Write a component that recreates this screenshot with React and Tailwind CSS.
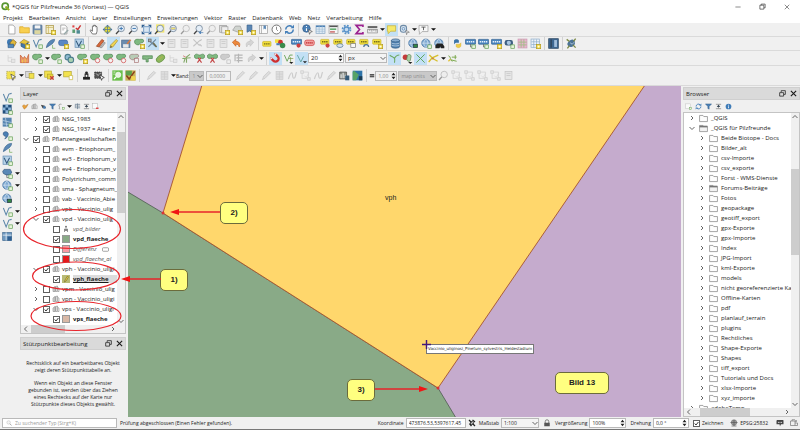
import React from "react";

const blue = "#4a7fb5";
const page = <path d="M4 1.5h6l3 3V14.5H4z" fill="#fff" stroke="#8a8a8a" />;
const plusBadge = (
  <g>
    <rect x="9.5" y="9.5" width="6" height="6" fill="#f5e04a" stroke="#b59a1e" />
    <path d="M12.5 11v3M11 12.5h3" stroke="#fff" />
  </g>
);
const greenBadge = <rect x="10" y="10" width="5" height="5" fill="#e8f4dc" stroke="#5f9c4f" />;
const lens = (
  <g>
    <circle cx="9" cy="6.5" r="4.7" fill="#e4eef8" stroke="#7d8ea0" strokeWidth="1.3" />
    <path d="M5.5 10L1.5 14.5" stroke="#444" strokeWidth="2" />
  </g>
);
const blob = (
  <path d="M1 4c1-3 5-2 7-2s6-1 6 2-2 3-4 3-1 3-4 3-6-2-5-6z" fill="#7fb980" stroke="#4c8450" />
);
const globe = (
  <g>
    <circle cx="7" cy="7.5" r="6" fill="#7fa9d2" stroke="#3f6d9d" />
    <path d="M1 7.5h12M7 1.5c-4 4-4 8 0 12M7 1.5c4 4 4 8 0 12" fill="none" stroke="#dbe8f4" />
  </g>
);
const vee = <path d="M2 3l4 10L10 3l4-1" fill="none" stroke="#5c86a8" strokeWidth="1.5" />;
const label = (
  <g>
    <rect x="1" y="2" width="12" height="7" rx="1" fill="#f2df3a" stroke="#c9b52a" />
    <path d="M3 5.5h8" stroke="#6d641c" strokeWidth="2" strokeDasharray="2 1" />
  </g>
);
const tag = (
  <g>
    <rect x="0.5" y="2" width="15" height="7" rx="1" fill="#4a86c0" stroke="#2f5f90" />
    <path d="M2.5 5.5h11" stroke="#e6eff8" strokeWidth="2" strokeDasharray="2 1" />
  </g>
);
const tree = (
  <g>
    <path d="M2 13V6l4-3v10zM7 13V3l4-1v11z" fill="#d8d8d8" stroke="#777" />
    <path d="M12 5l2 1v7h-2" fill="#eee" stroke="#777" />
  </g>
);

const ART = {
  page,
  folder: <path d="M1 4h5l1.5 1.5H15V13H1z" fill="#f8cf4f" stroke="#d9a520" />,
  save: (
    <g>
      <rect x="1.5" y="1.5" width="13" height="13" rx="1" fill="#6d8cae" stroke="#4a6a8c" />
      <rect x="4" y="2" width="8" height="4.5" fill="#f4f4f4" />
      <rect x="3.5" y="9" width="9" height="5.5" fill="#ddd7a0" />
    </g>
  ),
  layout: <g><rect x="1.5" y="2" width="11" height="12" fill="#f4efcf" stroke="#a48f3c" /><path d="M2 5h10M5 2v12" stroke="#c5b25a" />{plusBadge}</g>,
  manager: <g>{page}<path d="M6 6h5M6 8.5h3" stroke="#999" /><path d="M8 14l6-6 1.5 1.5-6 6z" fill="#9aa" /></g>,
  style: <g><rect x="2" y="2" width="3" height="3" fill="#d44" /><path d="M7 6l3 2 4-6" stroke="#c33" strokeWidth="2" fill="none" /><rect x="2" y="8" width="4" height="5" fill="#5b9c72" /><rect x="8" y="9" width="5" height="5" fill="#4d8a92" /></g>,
  hand: <path d="M5 14.500L1.500 9.500 2.800 8.500 5 10.500V3.500a.8.800 0 011.600 0V2.300a.8.800 0 011.700 0v.7a.8.800 0 011.700 0v1.500a.8.800 0 011.700 0V10.500L10.500 14.500z" fill="#fff" stroke="#444" />,
  pan: <g><path d="M8 1l3 3H5zM8 15l3-3H5zM1 8l3-3v6zM15 8l-3-3v6z" fill="#48729a" /><rect x="4.5" y="4.5" width="7" height="7" fill="#e9df3f" stroke="#8d9c38" /><path d="M8 4v8M4 8h8" stroke="#48729a" /></g>,
  zoomin: <g>{lens}<path d="M9 4v5M6.5 6.5h5" stroke={blue} strokeWidth="1.5" /></g>,
  zoomout: <g>{lens}<path d="M6.5 6.5h5" stroke={blue} strokeWidth="1.5" /></g>,
  full: <g><path d="M1 1h5L1 6zM15 1h-5l5 5zM1 15h5l-5-5zM15 15h-5l5-5z" fill="#2f5e90" /><rect x="4" y="4" width="8" height="8" fill="#d7e5f2" stroke={blue} /></g>,
  zoomsel: <g><rect x="3" y="0.5" width="12" height="12" fill="#f2e56a" />{lens}</g>,
  zoomlayer: <g>{lens}<path d="M6 5h6v3H6z" fill="#f2e56a" stroke="#aaa" /></g>,
  zoomlast: <g>{lens}<path d="M9 12.5h6M9 12.5l2-2v4z" stroke={blue} fill={blue} /></g>,
  lens,
  newmap: <g><rect x="1" y="2" width="10" height="10" fill="#ddd" stroke="#999" /><rect x="4" y="4" width="9" height="9" fill="#eee" stroke="#999" />{plusBadge}</g>,
  new3d: <g><path d="M1 9l4-6h7l2 5-5 4z" fill="#d0d4d0" stroke="#999" />{plusBadge}</g>,
  bookmark: <g><path d="M3 1.500h7V12l-3.500-2L3 12z" fill="#5a87b5" stroke="#3a628c" />{plusBadge}</g>,
  marks: <g><rect x="2" y="2" width="12" height="12" fill="#fafafa" stroke="#999" /><path d="M8 2h3.500v6L9.700 6.500 8 8z" fill="#5a87b5" /><path d="M5 2v12" stroke="#999" /></g>,
  clock: <g><circle cx="8" cy="8" r="6.5" fill="#fff" stroke="#666" strokeWidth="1.3" /><path d="M8 4v4l2 2" fill="none" stroke="#555" /></g>,
  refresh: <g fill="none" stroke="#3f7cb8" strokeWidth="2.2"><path d="M2.500 8a5.500 5.500 0 019-4.200M13.500 8a5.500 5.500 0 01-9 4.200" /><path d="M14.500 1v5h-5zM1.500 15v-5h5z" fill="#3f7cb8" stroke="none" /></g>,
  identify: <g><circle cx="6.5" cy="6.5" r="5.5" fill="#4a7fb5" stroke="#335c87" /><path d="M6.5 3v1.5M6.5 6v4" stroke="#fff" strokeWidth="1.6" /><path d="M9 8l6 3-3 1 -1 3z" fill="#fff" stroke="#555" /></g>,
  table: <g><rect x="1.5" y="2.5" width="13" height="11" fill="#e7f0f8" stroke="#7ea0c0" /><path d="M1.5 3.5h13" stroke={blue} strokeWidth="2" /><path d="M1.5 7.5h13M1.5 10.5h13M6 3v10M10.5 3v10" stroke="#9ebad4" /></g>,
  stats: <g><rect x="1.5" y="2" width="13" height="12" fill="#f5f5f5" stroke="#999" /><path d="M2 3.5h12" stroke="#555" strokeWidth="2" /><path d="M3 7.5h9" stroke="#4ca35b" strokeWidth="2" /><path d="M3 11.5h7" stroke="#c95f5f" strokeWidth="2" /></g>,
  gear: <g><circle cx="8" cy="8" r="5.8" fill="none" stroke="#5b93c9" strokeWidth="2.5" strokeDasharray="2.6 1.95" /><circle cx="8" cy="8" r="3.6" fill="#c6dcf0" stroke="#5b93c9" strokeWidth="2" /></g>,
  sigma: <path d="M13 4.500V2H3l5 6-5 6h10v-2.500" fill="none" stroke="#9b2290" strokeWidth="2.4" />,
  ruler: <g><rect x="1" y="3" width="14" height="3" fill="#666" /><rect x="1" y="8" width="14" height="5" fill="#eee" stroke="#888" /><path d="M4 8v2M7 8v3M10 8v2M13 8v3" stroke="#777" /></g>,
  tip: <path d="M2 2.500h12v8H7L3 14v-3.500H2z" fill="#f5e96b" stroke="#c4ad2f" />,
  annot: <g><rect x="2" y="2" width="9" height="10" rx="4" fill="#dce6ef" stroke="#6d8aa6" strokeWidth="1.5" /><circle cx="6.5" cy="7" r="2" fill="none" stroke={blue} /><path d="M10 9l5 3-3 .5-1 3z" fill="#fff" stroke="#777" /></g>,
  text: <g><path d="M1.500 2h13v9H6l-4 4v-4h-.5z" fill="#f7f7f7" stroke="#999" /><path d="M5 4.500h6M8 4.500V9" stroke="#555" strokeWidth="1.3" /></g>,
  source: <g><circle cx="6" cy="6" r="4.5" fill="#3f79b3" /><path d="M6 7l4-5 5 4-3 6-6-1z" fill="#e0b93b" stroke="#8c6b20" /><path d="M3 9h8v5H3z" fill="#5389bb" stroke="#2f5e90" /></g>,
  geopkg: <g><path d="M1 7l6-5 8 4-5 3z" fill="#e6c53d" stroke="#a2852a" /><path d="M3 8v4l5 3 5-2V7L9 10z" fill="#4179ad" stroke="#2a527c" />{plusBadge}</g>,
  shape: <g>{vee}{greenBadge}</g>,
  feather: <g><path d="M2 14C3 7 8 2 14 2c0 5-6 8-12 12z" fill="#5a88b6" stroke="#3c668f" /><path d="M11 10v5h4" stroke="#6faa55" fill="none" /></g>,
  bubble: <g><rect x="1" y="3" width="13" height="8" rx="3" fill="#5a88c4" stroke="#3c66a0" />{plusBadge}</g>,
  dbubble: <g><path d="M3 2h9l2 4-2 4H6l-4-2-1-3z" fill="#5a88b6" stroke="#33587d" /><path d="M7 10v4h3" stroke="#555" fill="none" />{greenBadge}</g>,
  virtual: <g><rect x="1.5" y="1.5" width="12" height="12" fill="#b9d4ea" stroke="#5b87ae" /><path d="M3 4l4 8 4-8" fill="none" stroke="#34597c" strokeWidth="1.5" />{greenBadge}</g>,
  pencils: <g><path d="M2 12L10 2l3 2-7 9z" fill="#d9683a" stroke="#91401d" /><path d="M7 14l6-8 2 1-5 7z" fill="#bbb" stroke="#888" /></g>,
  pencil: <g><path d="M3 14l1-4 8-8 2 2-7 9z" fill="#f0d552" stroke="#a98d27" /><path d="M3 14l1-3 2 2z" fill="#555" /></g>,
  savedit: <g><rect x="1" y="3" width="12" height="11" fill="#6d8cae" stroke="#4a6a8c" /><rect x="3" y="9" width="8" height="5" fill="#e9e9e9" /><path d="M8 8l5-6 2 1-5 6z" fill="#e17b3d" /></g>,
  addpoly: <g>{blob}{plusBadge}</g>,
  vertex: <g><path d="M2 13L13 2M2 3l11 10" stroke="#69839a" strokeWidth="1.5" /><rect x="2" y="1.5" width="4" height="4" fill="#aaa" stroke="#666" /><path d="M9 7l5 6" stroke="#6f6f52" strokeWidth="2" /></g>,
  doc: <g><rect x="3" y="2" width="10" height="12" fill="#ddd" stroke="#999" /><path d="M5 5h6M5 8h6" stroke="#999" /></g>,
  cut: <path d="M2 2l9 9M2 12l10-9M11 9l3 3M12 4l2-2" stroke="#999" strokeWidth="1.6" />,
  undo: <path d="M2 6l5-4v3c5 0 7 3 5 8-1-3-2-4-5-4v3z" fill="#ee8a3c" stroke="#c75f1c" />,
  redo: <path d="M14 6L9 2v3C4 5 2 8 4 13c1-3 2-4 5-4v3z" fill="#bbb" stroke="#999" />,
  label: <g transform="translate(0,3)">{label}</g>,
  labels: <g><rect x="0" y="2" width="8" height="5" fill="#f2df3a" /><circle cx="8" cy="6" r="3.5" fill="#c33" /><circle cx="11" cy="11" r="4" fill="#3a8a4c" /><path d="M2 9h5" stroke={blue} strokeWidth="3" /></g>,
  pinlabel: <g>{tag}<circle cx="11" cy="11" r="3" fill="#cf3f3f" /></g>,
  redlabel: <g><rect x="1" y="3" width="14" height="8" rx="3" fill="#f2a0a0" stroke="#ce4040" /><path d="M3 7h10" stroke="#b22" strokeWidth="2" strokeDasharray="2 1" /></g>,
  lab1: <g>{label}<circle cx="11" cy="11" r="3" fill="#c44" /></g>,
  lab2: <g>{label}<ellipse cx="10" cy="11" rx="4.5" ry="2.8" fill="#d8e3ee" stroke="#4b7196" /></g>,
  lab3: <g>{label}<rect x="7" y="8" width="7" height="6" fill="#f8f8f8" stroke="#777" /></g>,
  lab4: <g>{label}<path d="M7 13a3.500 3.500 0 117 0" fill="none" stroke="#4b7196" strokeWidth="1.8" /></g>,
  lab5: <g>{label}{plusBadge}</g>,
  db: <g><path d="M2 3.500v9c0 3 12 3 12 0v-9z" fill="#4f80b0" stroke="#2d577f" /><ellipse cx="8" cy="3.5" rx="6" ry="2.2" fill="#86acd1" stroke="#2d577f" /><path d="M2 7c1 2 11 2 12 0M2 10c1 2 11 2 12 0" fill="none" stroke="#cfe0ef" /></g>,
  web1: <g>{globe}<rect x="8" y="9" width="6" height="5" fill="#384" stroke="#234" /></g>,
  web2: <g>{globe}{greenBadge}</g>,
  web3: <g>{globe}<path d="M4 8h8l3 4v3h-5l-1-3-1 3H2v-3z" fill="#222" /></g>,
  python: <g><path d="M3 8V4c0-3 7-3 7 0v3H6c-2 0-2 2-3 2z" fill="#3b74a8" /><path d="M13 7v4c0 4-7 4-7 1V9h4c2 0 2-1 3-2z" fill="#f0ce45" stroke="#caa52c" strokeWidth=".5" /></g>,
  tag1: <g>{tag}<path d="M8 9v4h6" stroke="#555" fill="none" />{greenBadge}</g>,
  tag3: <g>{tag}{plusBadge}</g>,
  camera: <g><rect x="1" y="3" width="12" height="8" rx="3" fill="#3e5f82" /><circle cx="7" cy="7" r="3" fill="#a9c6e2" />{greenBadge}</g>,
  pinkgrid: <g><rect x="1.5" y="1.5" width="13" height="13" fill="#e9b4ce" stroke="#cc98b4" /><path d="M6 2v12M10 2v12M2 6h12M2 10h12" stroke="#a2bd87" strokeWidth="1.3" /></g>,
  grid: <g><rect x="1.5" y="1.5" width="12" height="12" fill="#eef4fa" stroke="#8aaac8" /><path d="M5.5 2v12M9.5 2v12M2 5.5h12M2 9.5h12" stroke="#8aaac8" />{plusBadge}</g>,
  book: <g><rect x="1" y="1" width="14" height="14" fill="#3d6690" stroke="#26435f" /><rect x="9" y="3" width="4" height="10" fill="#a2bfdc" /><path d="M4.5 2v12" stroke="#222" /></g>,
  plug: <g><path d="M3 6c4-5 9-5 10 0s-6 9-9 6-2-4-1-6z" fill="#4c7396" /><path d="M1 2l4 3M14 1l-3 4M2 15l3-4M14 14l-4-4" stroke="#7d8a45" strokeWidth="2" /><path d="M6 7l3 2 3-3" fill="none" stroke="#d4e2ee" /></g>,
  chart: <g><path d="M2 14V3l4 5 2-3 3 4 3-7v12z" fill="#eb9a6b" stroke="#c3592d" /><path d="M5 14v-4M9 14V8" stroke="#f2df3a" /></g>,
  poly: <g>{blob}{greenBadge}</g>,
  rings: <g fill="#8fbad0" stroke="#4c7d8d" strokeWidth="1.5"><circle cx="5.5" cy="6" r="4" /><circle cx="10" cy="10" r="4" fill="#a8d0b0" /></g>,
  polyred: <g>{blob}<circle cx="11" cy="11" r="3.2" fill="#f4f4f4" stroke="#cf4444" /></g>,
  polygray: <g><path d="M1 4c1-3 5-2 7-2s6-1 6 2-2 3-4 3-1 3-4 3-6-2-5-6z" fill="#b8ccb6" stroke="#9a7777" /><rect x="8" y="8" width="6" height="6" fill="#eee" stroke="#a77" /></g>,
  polyhalf: <path d="M1 4h14v4H9v5H6V9H1z" fill="#83b883" stroke="#4c8450" />,
  leaf: <g><ellipse cx="8" cy="8" rx="7" ry="4.5" transform="rotate(-40 8 8)" fill="#8cb75f" stroke="#608e3c" /><path d="M5 10l6-5" stroke="#c9b040" /></g>,
  nodes: <g><path d="M3 3v9h9M3 7h6" fill="none" stroke="#aaa" /><rect x="8" y="9" width="5" height="5" fill="#ddd" stroke="#aaa" /></g>,
  trim: <g><path d="M8 14V6l5-4M2 8l12-1M4 14l2-6" fill="none" stroke="#82a867" strokeWidth="1.6" /><path d="M3 4l4 2" stroke="#cc5656" /></g>,
  scissor: <g><path d="M1 3c3-3 5 0 7 0s5-3 7 0-1 5-3 5-2-1-4-1-2 1-4 1-5-2-3-5z" fill="#7fb980" stroke="#4c8450" /><path d="M5 14l5-7M11 14L6 7" stroke="#c44646" strokeWidth="1.6" /></g>,
  magnet: <g transform="rotate(135 8 8)"><path d="M3.500 14V8a4.500 4.500 0 019 0v6" fill="none" stroke="#cf3030" strokeWidth="3.4" /><path d="M1.800 12.500h3.400M10.800 12.500h3.400" stroke="#eee" strokeWidth="2" /></g>,
  veegreen: <g><path d="M2 3l4 9 4-9h4" fill="none" stroke="#6da860" strokeWidth="1.4" /><path d="M8 8h7M11 6v8" stroke="#7b9a48" /><path d="M9 13h6l-3 3z" fill="#222" /></g>,
  vee: <g><path d="M2 3l5 10 4-8" fill="none" stroke="#5da39f" strokeWidth="1.3" /><path d="M10 12h6l-3 3z" fill="#222" /></g>,
  topo: <path d="M1 3c3 3 6 2 7 5s0 4 0 6M8 8c2-4 4-5 7-5" fill="none" stroke="#6da860" strokeWidth="1.5" />,
  overlap: <g><circle cx="5" cy="6" r="4" fill="#c33a3a" /><path d="M8 3c3-2 6 0 5 3s0 5-2 6-5-2-4-4z" fill="#a9cfa5" stroke="#57804f" /><path d="M9 13h6l-3 3z" fill="#222" /></g>,
  cross: <path d="M2 2l12 12M14 2L2 14" stroke="#55a04e" strokeWidth="1.3" />,
  trace: <g><path d="M1 13l5-6 9-4M2 3l5 5 7 4" fill="none" stroke="#d6c02d" strokeWidth="2" /><circle cx="7" cy="8" r="1.6" fill="#c84" /></g>,
  selfsnap: <g><path d="M2 4c4 0 2 8 6 8M7 6h7M6 10l8 2M12 3v6" fill="none" stroke="#7aa84c" strokeWidth="1.4" /><path d="M2 12l3-3" stroke="#e0c23a" strokeWidth="2" /></g>,
  select: <g><rect x="1" y="2" width="12" height="11" fill="#f2e24e" stroke="#a7a26a" strokeDasharray="2 1" /><path d="M7 6l7 4-3 1-1 4z" fill="#fff" stroke="#444" /></g>,
  selval: <g><rect x="1" y="2" width="9" height="9" fill="#d9d9d9" stroke="#999" /><rect x="6" y="5" width="7" height="7" fill="#f2e24e" stroke="#b4a530" /></g>,
  desel: <g><rect x="1" y="1.5" width="10" height="9" fill="#f2e24e" stroke="#b4a530" /><rect x="5" y="6" width="8" height="7" fill="#e8d83a" stroke="#b4a530" /><path d="M9 9l5 5M14 9l-5 5" stroke="#cc3b3b" strokeWidth="2" /></g>,
  selall: <g><rect x="1" y="2" width="11" height="8" fill="#f2e24e" stroke="#b4a530" /><path d="M9 8h5v6H9z" fill="#fff" stroke="#c6b83c" /></g>,
  stamp: <g><path d="M3 10h10v4H3z" fill="#222" /><path d="M6 10V6h4v4" fill="none" stroke="#222" strokeWidth="1.5" /><circle cx="8" cy="4" r="2" fill="#222" /></g>,
  stampsel: <g><path d="M1 3h10v9H1z" fill="#555" stroke="#222" strokeDasharray="2 1" /><path d="M3 5l3 3 4-4" stroke="#eee" fill="none" /><path d="M8 7l7 4-3 1-1 3z" fill="#fff" stroke="#222" /></g>,
  green: <g><rect x=".5" y=".5" width="15" height="15" fill="#6cbf4b" /><circle cx="9" cy="7" r="3.8" fill="#e6f4df" stroke="#fff" /><path d="M6 10l-3 3" stroke="#fff" strokeWidth="2" /><path d="M2 3h3M2 6h2" stroke="#fff" /></g>,
  greenpen: <g><rect x=".5" y=".5" width="15" height="15" fill="#c8b25a" /><path d="M1 1h9v7H1z" fill="#5ea04b" /><path d="M2 8l4 5 8-11" fill="none" stroke="#8a3f1a" strokeWidth="2.2" /><path d="M9 9h6v6H9z" fill="#f0d44e" /></g>,
  brush: <path d="M2 14l2-5 7-7 3 2-8 8z" fill="#ccc" stroke="#999" />,
  dots: <g fill="#ccc" stroke="#aaa"><rect x="3" y="2" width="10" height="12" /><path d="M3 6h10M3 10h10M8 2v12" /></g>,
  poise: <path d="M2 13c2-6 3-9 5-9s0 8 3 8 2-6 4-9" fill="none" stroke="#aaa" strokeWidth="1.8" />,
  rast1: <g><path d="M1 3h10v10H1z" fill="#8a8f88" stroke="#444" /><path d="M3 12V6M6 12V4M9 12V7" stroke="#eee" strokeWidth="1.6" /><path d="M9 8h6v7H9z" fill="#345a78" /></g>,
  rast2: <g><rect x="1" y="1" width="14" height="14" fill="#2d73a8" /><path d="M3 1l7 6-4 8H1V3z" fill="#55a267" /><path d="M10 9h5v6h-5z" fill="#183b52" /></g>,
  poly2: <g><rect x="3" y="3" width="9" height="9" fill="none" stroke="#aaa" /><path d="M1 1h4v4H1zM11 11h4v4h-4z" fill="#ddd" stroke="#aaa" /><path d="M6 8l3 3 4-7" fill="none" stroke="#bbb" /></g>,
  line: <path d="M2 5h12M2 10h12" stroke="#222" strokeWidth="3" />,
  raster: <g><rect x="1" y="1" width="13" height="13" fill="#234f7c" /><path d="M5 1h4v4H5zM1 5h4v4H1zM9 5h4v4H9zM5 9h4v4H5z" fill="#8db6da" />{greenBadge}</g>,
  mesh: <g><rect x="1" y="1" width="13" height="13" fill="#5684b0" /><path d="M1 5l13 3M1 10l13 1M5 1l2 13" stroke="#c5daec" />{greenBadge}</g>,
  comma: <g><path d="M2 4c3-3 8-1 7 3s-3 5-5 6c2-2 2-4 1-4S1 8 2 4z" fill="#4a7fb5" stroke="#335c87" />{greenBadge}</g>,
  wtable: <g><rect x="1" y="2" width="13" height="12" fill="#6d98c0" stroke="#466d92" /><path d="M1 6h13M6 2v12" stroke="#fff" /><rect x="8" y="8" width="6" height="6" fill="#2f5e90" /></g>,
  paint: <path d="M1 7l3-3 4 2 6-3-4 7-5 4z" fill="#e9a33b" stroke="#b4702a" />,
  tree,
  eye: <g><path d="M2 4l9 2 3 6H6z" fill="#444" /><circle cx="10" cy="10" r="3" fill={blue} /></g>,
  funnel: <path d="M1 2h14l-5.500 6v6l-3-1.500V8z" fill="#4a7fb5" stroke="#335c87" />,
  expr: <g><path d="M8 3c-5-2-7 2-5 5s-3 5 2 6" fill="none" stroke="#777" strokeWidth="1.5" />{greenBadge}</g>,
  expand: <path d="M2 3h12M5 7h9M5 11h9M3 4v8M8 1v13" stroke="#6a7f92" strokeWidth="1.7" />,
  collapse: <g><path d="M2 3h12M2 13h12M8 4v8" stroke="#777" strokeWidth="1.5" /><path d="M4 9l4-5 4 5z" fill="#345" /></g>,
  remove: <g><rect x="1.5" y="1.5" width="11" height="11" fill="#fafafa" stroke="#aaa" /><path d="M9 12h6" stroke="#e03a3a" strokeWidth="3" /></g>,
  addb: <g><rect x="1.5" y="2" width="11" height="11" fill="#fafafa" stroke="#bbb" />{greenBadge}</g>,
  info: <g><circle cx="8" cy="8" r="6.5" fill="#3f7cb8" /><path d="M8 4v2M8 7.500V12" stroke="#fff" strokeWidth="1.8" /></g>,
  points: <g><circle cx="8" cy="3.5" r="2" fill="#777" /><path d="M5 8h6v3H5zM5 11v3M11 11v3" fill="#888" stroke="#777" strokeWidth="1.5" /></g>,
  edit: <g><rect width="16" height="16" fill="#b9bb76" /><path d="M5 14l1-4 5-8 2 2-5 8z" fill="#f0d552" stroke="#5d5217" /></g>,
  dirfolder: <path d="M1 2.500h6l1.500 2H15v9H1z" fill="#fdfdfd" stroke="#8e8e8e" strokeWidth="1.4" />,
  dirlink: <g><path d="M1 2.500h6l1.500 2H15v9H1z" fill="#f2f2f2" stroke="#888" strokeWidth="1.3" /><path d="M1 4.500h14" stroke="#777" strokeWidth="3" /></g>,
  extent: <g><path d="M2 2l5 5M9 9l5 5M3 9l4 5M9 2l5 4" stroke="#222" strokeWidth="2.6" /><circle cx="8" cy="8" r="3" fill="none" stroke="#222" strokeWidth="1.5" /></g>,
  lock: <g><path d="M4.500 8V5a3.500 3.500 0 017 0v3" fill="none" stroke="#777" strokeWidth="1.8" /><rect x="2.5" y="7.5" width="11" height="7" fill="#555" /></g>,
  crs: <g><circle cx="8" cy="7" r="5.5" fill="#999" stroke="#666" /><path d="M1 7h14M8 2v12M3 14h10" stroke="#555" strokeWidth="1.3" /></g>,
  log: <g><path d="M2 2h12a1.500 1.500 0 011 1.500v7H10l-2 4-1-4H1v-7z" fill="#444" /><circle cx="5" cy="6.5" r="1.2" fill="#eee" /><circle cx="8" cy="6.5" r="1.2" fill="#eee" /><circle cx="11" cy="6.5" r="1.2" fill="#eee" /></g>,
  tray: <g fill="none" stroke="#777" strokeWidth="1.4"><path d="M1 4h9v9H1zM10 8h5v5h-5M4 4V1.500h6M12 2v4M10 4h4" /></g>,
  dock: <g fill="none" stroke="#1c1c1c" strokeWidth="1.7"><path d="M5 5V1.500h9.500V10H11" /><path d="M1.500 6h9v8h-9z" /></g>,
  close: <path d="M2 2l12 12M14 2L2 14" stroke="#1c1c1c" strokeWidth="2.6" />,
  min: <path d="M1 8h14" stroke="#333" strokeWidth="1.5" />,
  restore: <g fill="none" stroke="#333" strokeWidth="1.5"><path d="M5 5V2.500h9V11h-2.500" /><path d="M2 5h9v9H2z" /></g>,
  xthin: <path d="M2 2l12 12M14 2L2 14" stroke="#333" strokeWidth="1.5" />,
  chip: <rect x="1" y="4" width="14" height="8" rx="2" fill="#fff" stroke="#777" strokeWidth="1.5" />,
};

const Art = ({ name, className = "size-[11px]" }) => (
  <svg viewBox="0 0 16 16" className={`shrink-0 ${className}`} aria-hidden="true">{ART[name]}</svg>
);

const Down = () => (
  <svg viewBox="0 0 6 6" className="size-[5px] shrink-0" aria-hidden="true"><path d="M0 1.500h6L3 4.500z" fill="#111" /></svg>
);

const Chevron = ({ dir = "right", className = "size-[6px]" }) => {
  const d = { right: "M2 1l2 2-2 2", down: "M0.500 2L3 4.500 5.500 2", left: "M4 0.500L1.500 3 4 5.500", up: "M0.500 4L3 1.500 5.500 4" }[dir];
  return (
    <svg viewBox="0 0 6 6" className={`shrink-0 ${className}`} aria-hidden="true"><path d={d} fill="none" stroke="#555" strokeWidth="0.9" /></svg>
  );
};

/* Toolbar syntax: "|" is a group divider, ">" a drop-down arrow,
   "_" a small space, "*name" an active tool, "~name" a disabled one. */
const Tools = ({ items }) =>
  items.split(" ").map((item, i) => {
    if (item === "|") return <span key={i} className="flex h-[13px] w-[5px] shrink-0 justify-center"><i className="w-px bg-[#d2d2d2]" /></span>;
    if (item === "_") return <span key={i} className="w-[3px] shrink-0" />;
    if (item === ">") return <button key={i} aria-label="Menü" className="flex h-[13px] w-[6px] shrink-0 items-center justify-center"><Down /></button>;
    const on = item[0] === "*";
    const off = item[0] === "~";
    const name = on || off ? item.slice(1) : item;
    return (
      <button key={i} disabled={off} aria-label={name} className={`flex h-[13px] w-[13px] shrink-0 items-center justify-center ${on ? "bg-[#c3e0f5]" : ""} ${off ? "opacity-50 grayscale" : ""}`}>
        <Art name={name} />
      </button>
    );
  });

const Bar = ({ children, className = "h-[14px]" }) => (
  <div role="toolbar" className={`flex shrink-0 items-center border-b border-[#dadada] pl-[5px] ${className}`}>{children}</div>
);

const Stepper = () => (
  <span className="flex w-[6px] shrink-0 flex-col items-center justify-center">
    <svg viewBox="0 0 6 10" className="h-[8px] w-[5px]" aria-hidden="true"><path d="M0.500 4L3 1l2.500 3zM0.500 6L3 9l2.500-3z" fill="#222" /></svg>
  </span>
);

const Field = ({ label, value, width, stepper, disabled }) => (
  <span className={`flex h-[10px] shrink-0 border border-[#b9b9b9] ${disabled ? "bg-[#f0f0f0] text-[#888]" : "bg-white"} ${width}`}>
    <input aria-label={label} defaultValue={value} disabled={disabled} className="w-full min-w-0 bg-transparent pl-[2px] outline-none" />
    {stepper && <Stepper />}
  </span>
);

const Combo = ({ label, value, width, disabled }) => (
  <span className={`flex h-[10px] shrink-0 items-center border border-[#b9b9b9] ${disabled ? "bg-[#c9c9c9] text-[#8c8c8c]" : "bg-[#f4f4f4]"} ${width}`}>
    <select aria-label={label} disabled={disabled} className="w-full min-w-0 appearance-none bg-transparent pl-[2px] outline-none"><option>{value}</option></select>
    <Chevron dir="down" />
  </span>
);

const Check = ({ id, checked }) => (
  <span className="grid size-[7px] shrink-0">
    <input id={id} type="checkbox" defaultChecked={checked} className="peer col-start-1 row-start-1 size-[7px] appearance-none border border-[#5f5f5f] bg-white" />
    <svg viewBox="0 0 7 7" className="pointer-events-none invisible col-start-1 row-start-1 size-[7px] peer-checked:visible" aria-hidden="true"><path d="M1.700 3.500l1.300 1.500 2.400-3" fill="none" stroke="#222" strokeWidth="0.9" /></svg>
  </span>
);

const DockTitle = ({ children }) => (
  <header className="flex h-[13px] shrink-0 items-center gap-[4px] border border-[#cfcfcf] bg-[#dadada] px-[2px]">
    <h2 className="flex-1">{children}</h2>
    <button aria-label="Abdocken"><Art name="dock" className="size-[7px]" /></button>
    <button aria-label="Schließen"><Art name="close" className="size-[7px]" /></button>
  </header>
);

const VScroll = ({ thumb, space }) => (
  <div className="flex w-[8px] shrink-0 flex-col items-center bg-[#f0f0f0] py-[1px]">
    <Chevron dir="up" />
    <div className={`shrink-0 ${space}`} />
    <div className={`w-full shrink-0 bg-[#cdcdcd] ${thumb}`} />
    <div className="flex-1" />
    <Chevron dir="down" />
  </div>
);

const HScroll = ({ thumb, space }) => (
  <div className="flex h-[8px] shrink-0 items-center bg-[#f0f0f0] pl-[2px] pr-[9px]">
    <Chevron dir="left" />
    <div className={`shrink-0 ${space}`} />
    <div className={`h-full shrink-0 bg-[#cdcdcd] ${thumb}`} />
    <div className="flex-1" />
    <Chevron dir="right" />
  </div>
);

const LAYERS = [
  [2, 1, "NSG_1973"], [2, 1, "NSG_1983"], [2, 1, "NSG_1937 = Alter E"], [1, 1, "Pflanzengesellschaften", "down"],
  [2, 0, "evm - Eriophorum_"], [2, 0, "ev3 - Eriophorum_v"], [2, 0, "ev4 - Eriophorum_v"],
  [2, 0, "Polytrichum_comm"], [2, 0, "sma - Sphagnetum_"], [2, 0, "vab - Vaccinio_Abie"], [2, 0, "vpb - Vaccinio_ulig"],
  [2, 1, "vpd - Vaccinio_ulig", "down"], [3, 0, "vpd_bilder", "points"], [3, 1, "vpd_flaeche", "bg-[#89aa87]"],
  [3, 0, "Differenz", "bg-[#f79aa3]"], [3, 0, "vpd_flaeche_al", "bg-[#e31a1c]"],
  [2, 1, "vph - Vaccinio_uligi", "down"], [3, 1, "vph_flaeche", "edit"],
  [2, 0, "vpm - Vaccinio_ulig"], [2, 0, "vpn - Vaccinio_uligi"],
  [2, 1, "vps - Vaccinio_uligi", "down"], [3, 1, "vps_flaeche", "bg-[#d9b8a6]"],
];
const INDENT = { 1: "pl-[2px]", 2: "pl-[12px]", 3: "pl-[32px]" };

const LayerRow = ({ level, checked, name, extra, id }) => {
  const leaf = level === 3;
  const tone = !leaf ? "" : checked ? "font-bold" : "italic text-[#555]";
  const active = name === "vph_flaeche";
  return (
    <li className={`flex h-[10px] items-center ${INDENT[level]}`}>
      {!leaf && <span className="mr-[4px] flex w-[6px]"><Chevron dir={extra === "down" ? "down" : "right"} /></span>}
      <Check id={id} checked={!!checked} />
      <label htmlFor={id} className={`flex h-[10px] items-center whitespace-nowrap pl-[2px] ${leaf ? "gap-[3px]" : "gap-[2px]"} ${active ? "flex-1" : ""}`}>
        {!leaf && <Art name="tree" className="size-[8px]" />}
        {leaf && ART[extra] && <Art name={extra} className="size-[8px]" />}
        {leaf && !ART[extra] && <i className={`size-[8px] border border-[#999] ${extra}`} />}
        <span className={`${tone} ${active ? "flex-1 bg-[#dcdcdc] underline" : ""}`}>{name}</span>
        {name === "Differenz" && <Art name="chip" className="ml-[2px] size-[7px]" />}
      </label>
    </li>
  );
};

const FOLDERS = ["Beide Biotope - Docs", "Bilder_alt", "csv-Importe", "csv_exporte", "Forst - WMS-Dienste", "Forums-Beiträge", "Fotos", "geopackage", "geotiff_export", "gpx-Exporte", "gpx-Importe", "Index", "JPG-Import", "kml-Exporte", "models", "nicht georeferenzierte Kar", "Offline-Karten", "pdf", "planlauf_terrain", "plugins", "Rechtliches", "Shape-Exporte", "Shapes", "tiff_export", "Tutorials und Docs", "xlsx-Importe", "xyz_importe"];

const FolderRow = ({ name, top, open }) => (
  <li className={`flex h-[10px] items-center whitespace-nowrap ${top ? "pl-[5px]" : "pl-[15px]"}`}>
    <Chevron dir={open ? "down" : "right"} />
    <Art name={open || name === "Forums-Beiträge" ? "dirlink" : "dirfolder"} className="ml-[4px] mr-[3px] size-[9px]" />
    <span>{name}</span>
  </li>
);

const Callout = ({ children, className }) => (
  <div className={`absolute flex h-[22px] items-center justify-center rounded-[5px] border border-[#6b6b3c] bg-[#ffff80] font-['Liberation_Sans',sans-serif] text-[8px] font-bold text-[#222] ${className}`}>{children}</div>
);

const SIDE = ["shape", "raster", "mesh", "comma", "feather", "virtual", "dbubble>", "web2>", "web1", "shape>", "shape>", "wtable"];
const MENUS = ["Projekt", "Bearbeiten", "Ansicht", "Layer", "Einstellungen", "Erweiterungen", "Vektor", "Raster", "Datenbank", "Web", "Netz", "Verarbeitung", "Hilfe"];

export default function App() {
  return (
    <div className="flex h-screen flex-col overflow-hidden bg-[#f0f0f0] font-['Open_Sans','Noto_Sans',sans-serif] text-[6px] leading-[8px] text-[#1a1a1a]">
      <header className="flex h-[13px] shrink-0 items-center bg-white pl-[1px] pr-[10px]">
        <svg viewBox="0 0 16 16" className="size-[9px]" aria-hidden="true"><circle cx="7.5" cy="7.5" r="5.5" fill="none" stroke="#589632" strokeWidth="3" /><path d="M8 8l6.500 6.500" stroke="#93b023" strokeWidth="3.5" /></svg>
        <h1 className="flex-1 pl-[2px]">*QGIS für Pilzfreunde 36 (Vortest) — QGIS</h1>
        <div className="flex gap-[18px]">
          <button aria-label="Minimieren"><Art name="min" className="size-[6px]" /></button>
          <button aria-label="Verkleinern"><Art name="restore" className="size-[7px]" /></button>
          <button aria-label="Beenden"><Art name="xthin" className="size-[6px]" /></button>
        </div>
      </header>
      <nav className="flex h-[10px] shrink-0 items-center gap-[6px] bg-white pl-[3px]">
        {MENUS.map((m) => <button key={m}>{m}</button>)}
      </nav>

      <Bar>
        <Tools items="page folder save layout manager style | hand pan zoomin zoomout full zoomsel zoomlayer ~lens zoomlast ~lens newmap new3d bookmark marks clock refresh | identify table stats gear sigma ruler > *tip annot > text >" />
      </Bar>
      <Bar>
        <Tools items="source geopkg shape feather bubble _ virtual | _ pencils *pencil savedit addpoly *vertex > ~doc ~doc ~cut ~doc ~doc undo ~redo | label labels _ pinlabel redlabel _ lab1 lab2 lab3 lab4 lab5 | db | web1 web2 web3 | python tag1 tag1 tag3 camera pinkgrid grid | book | plug" />
      </Bar>
      <Bar className="h-[15px]">
        <Tools items="~nodes chart poly > poly rings addpoly polyred polyred polyred polygray polyhalf leaf ~nodes trim scissor scissor ~poly ~expand ~redo > | *magnet veegreen *vee" />
        <Field label="Toleranz" value="20" width="w-[36px]" stepper />
        <span className="w-[1px]" />
        <Combo label="Einheit" value="px" width="w-[42px]" />
        <span className="w-[1px]" />
        <Tools items="*topo overlap *cross trace > selfsnap" />
      </Bar>
      <Bar className="h-[20px] text-[5px]">
        <Tools items="select > selval > desel > selall | stamp stampsel | green greenpen | _ ~brush ~dots" />
        <Down />
        <span>Band:</span>
        <Combo label="Band" value="1" width="w-[15px]" disabled />
        <span className="w-[2px]" />
        <Field label="Wert" value="0,0000" width="w-[25px]" disabled />
        <Tools items="_ ~brush ~brush ~brush ~dots ~poise ~poly2 ~poise ~brush rast1 rast2 |" />
        <Art name="line" className="size-[6px]" />
        <Field label="Breite" value="1,00" width="w-[22px]" stepper disabled />
        <span className="w-[1px]" />
        <Combo label="Karteneinheit" value="map units" width="w-[39px]" disabled />
        <Tools items="~lens ~poly2 ~poly2 ~poly2 ~poly2 ~doc" />
      </Bar>

      <main className="relative flex min-h-0 flex-1">
        <div role="toolbar" className="mt-[5px] grid h-[152px] w-[20px] shrink-0 grid-rows-12">
          {SIDE.map((s, i) => (
            <div key={i} className="flex items-center pl-[2px]">
              <button aria-label={s.replace(">", "")} className="flex"><Art name={s.replace(">", "")} /></button>
              {s.endsWith(">") && <button aria-label="Menü" className="ml-[2px] flex"><Down /></button>}
            </div>
          ))}
        </div>

        <div className="flex w-[108px] shrink-0 flex-col pr-[2px] pt-[1px]">
          <section className="flex min-h-0 flex-1 flex-col">
            <DockTitle>Layer</DockTitle>
            <div role="toolbar" className="flex h-[12px] shrink-0 items-center gap-[2px] pl-[2px]">
              {["paint", "tree", "eye", "funnel", "expr"].map((n) => <button key={n} aria-label={n}><Art name={n} className="size-[7px]" /></button>)}
              <Down />
              {["expand", "collapse", "remove"].map((n) => <button key={n} aria-label={n}><Art name={n} className="size-[7px]" /></button>)}
            </div>
            <div className="flex min-h-0 flex-1 flex-col border border-[#c4c4c4] bg-white">
              <div className="flex min-h-0 flex-1">
                <ul className="-mt-[9px] min-w-0 flex-1 overflow-hidden [clip-path:inset(9px_0_0_0)]">
                  {LAYERS.map(([level, checked, name, extra], i) => (
                    <LayerRow key={name} id={`layer-${i}`} level={level} checked={checked} name={name} extra={extra} />
                  ))}
                </ul>
                <VScroll space="h-[12px]" thumb="h-[81px]" />
              </div>
              <HScroll space="w-[2px]" thumb="w-[34px]" />
            </div>
          </section>
          <section className="mt-[3px] flex h-[80px] shrink-0 flex-col">
            <DockTitle>Stützpunktbearbeitung</DockTitle>
            <div className="flex flex-1 flex-col gap-[6px] px-[4px] pt-[10px] text-center text-[5px] leading-[7px]">
              <p>Rechtsklick auf ein bearbeitbares Objekt zeigt deren Stützpunkttabelle an.</p>
              <p>Wenn ein Objekt an diese Fenster gebunden ist, werden über das Ziehen eines Rechtecks auf der Karte nur Stützpunkte dieses Objekts gewählt.</p>
            </div>
          </section>
        </div>

        <section aria-label="Karte" className="relative min-w-0 flex-1 overflow-hidden bg-[#c5abcd]">
          <svg className="absolute inset-0 h-full w-full" viewBox="0 0 553 331" preserveAspectRatio="xMinYMin slice" aria-hidden="true">
            <path d="M-1 105.500L35 127 310 302 328 332H-1z" fill="#89aa87" stroke="#4e5a50" strokeWidth="0.8" />
            <path d="M74 -1L35 127 310 302 517 -1z" fill="#ffd76c" stroke="#a5542e" strokeWidth="0.9" />
            <circle cx="35" cy="127" r="1.5" fill="#d33" />
            <circle cx="310" cy="302" r="1.5" fill="#d33" />
          </svg>
          <span className="absolute left-[257px] top-[108px] font-['Liberation_Sans',sans-serif] text-[7px]">vph</span>
          <div className="absolute left-[298px] top-[258px] flex h-[10px] items-center whitespace-nowrap border border-[#777] bg-white px-[1px] font-['DejaVu_Sans',sans-serif] text-[4px]">Vaccinio_uliginosi_Pinetum_sylvestris_Heidestadium</div>
          <Callout className="left-[32px] top-[183px] w-[28px]">1)</Callout>
          <Callout className="left-[92px] top-[116px] w-[28px]">2)</Callout>
          <Callout className="left-[219px] top-[293px] w-[28px]">3)</Callout>
          <Callout className="left-[427px] top-[286px] w-[54px]">Bild 13</Callout>
        </section>

        <section className="flex w-[119px] shrink-0 flex-col pl-[2px] pt-[1px]">
          <DockTitle>Browser</DockTitle>
          <div role="toolbar" className="flex h-[12px] shrink-0 items-center gap-[3px] pl-[2px]">
            {["addb", "refresh", "funnel", "collapse", "info"].map((n) => <button key={n} aria-label={n}><Art name={n} className="size-[7px]" /></button>)}
          </div>
          <div className="flex min-h-0 flex-1 flex-col border border-[#c4c4c4] bg-white">
            <div className="flex min-h-0 flex-1">
              <ul className="min-w-0 flex-1 overflow-hidden">
                <FolderRow name="_QGIS" top />
                <FolderRow name="_QGIS für Pilzfreunde" top open />
                {FOLDERS.map((f) => <FolderRow key={f} name={f} />)}
                <FolderRow name="adobeTemp" top />
              </ul>
              <VScroll space="h-[49px]" thumb="h-[86px]" />
            </div>
            <HScroll space="w-[8px]" thumb="w-[50px]" />
          </div>
        </section>

        <svg className="pointer-events-none absolute inset-0 h-full w-full" aria-hidden="true">
          <g fill="none" stroke="#e8242b" strokeWidth="1.2">
            <ellipse cx="72" cy="143" rx="48.5" ry="19.5" />
            <ellipse cx="76" cy="190" rx="43.5" ry="14" />
            <ellipse cx="76" cy="230" rx="45" ry="14.5" />
            <path d="M161 193h-32M220 126h-42M375 303h44" strokeWidth="1.5" />
          </g>
          <path d="M121 193l9-3v6zM170 126l9-3v6zM428 303l-9-3v6z" fill="#f01414" />
          <path d="M426.500 254v9M422 258.500h9" stroke="#43187a" strokeWidth="1.4" />
        </svg>
      </main>

      <footer className="flex h-[13px] shrink-0 items-center border-b border-[#777] px-[2px] text-[5px]">
        <label className="flex h-[10px] w-[115px] shrink-0 items-center gap-[3px] border border-[#b9b9b9] bg-white px-[3px]">
          <Art name="lens" className="size-[6px] -scale-x-100 grayscale opacity-60" />
          <input aria-label="Suche" placeholder="Zu suchender Typ (Strg+K)" className="w-full min-w-0 bg-transparent outline-none placeholder:text-[#999]" />
        </label>
        <span className="min-w-0 flex-1 truncate pl-[3px]">Prüfung abgeschlossen (Einen Fehler gefunden).</span>
        <div className="flex shrink-0 items-center gap-[2px]">
          <span>Koordinate</span>
          <Field label="Koordinate" value="473876.53,5397617.45" width="w-[60px]" />
          <button aria-label="Ausdehnung"><Art name="extent" className="size-[8px]" /></button>
          <span className="pl-[1px]">Maßstab</span>
          <Combo label="Maßstab" value="1:100" width="w-[38px]" />
          <Art name="lock" className="mx-[2px] size-[8px]" />
          <span>Vergrößerung</span>
          <Field label="Vergrößerung" value="100%" width="w-[37px]" stepper />
          <span className="pl-[2px]">Drehung</span>
          <Field label="Drehung" value="0,0 °" width="w-[36px]" stepper />
          <span className="pl-[2px]"><Check id="render" checked /></span>
          <label htmlFor="render">Zeichnen</label>
          <button className="ml-[5px] flex items-center gap-[2px]"><Art name="crs" className="size-[8px]" />EPSG:25832</button>
          <button aria-label="Protokoll" className="ml-[6px]"><Art name="log" className="size-[8px]" /></button>
          <button aria-label="Erweiterungen" className="ml-[4px]"><Art name="tray" className="size-[8px]" /></button>
        </div>
      </footer>
    </div>
  );
}
